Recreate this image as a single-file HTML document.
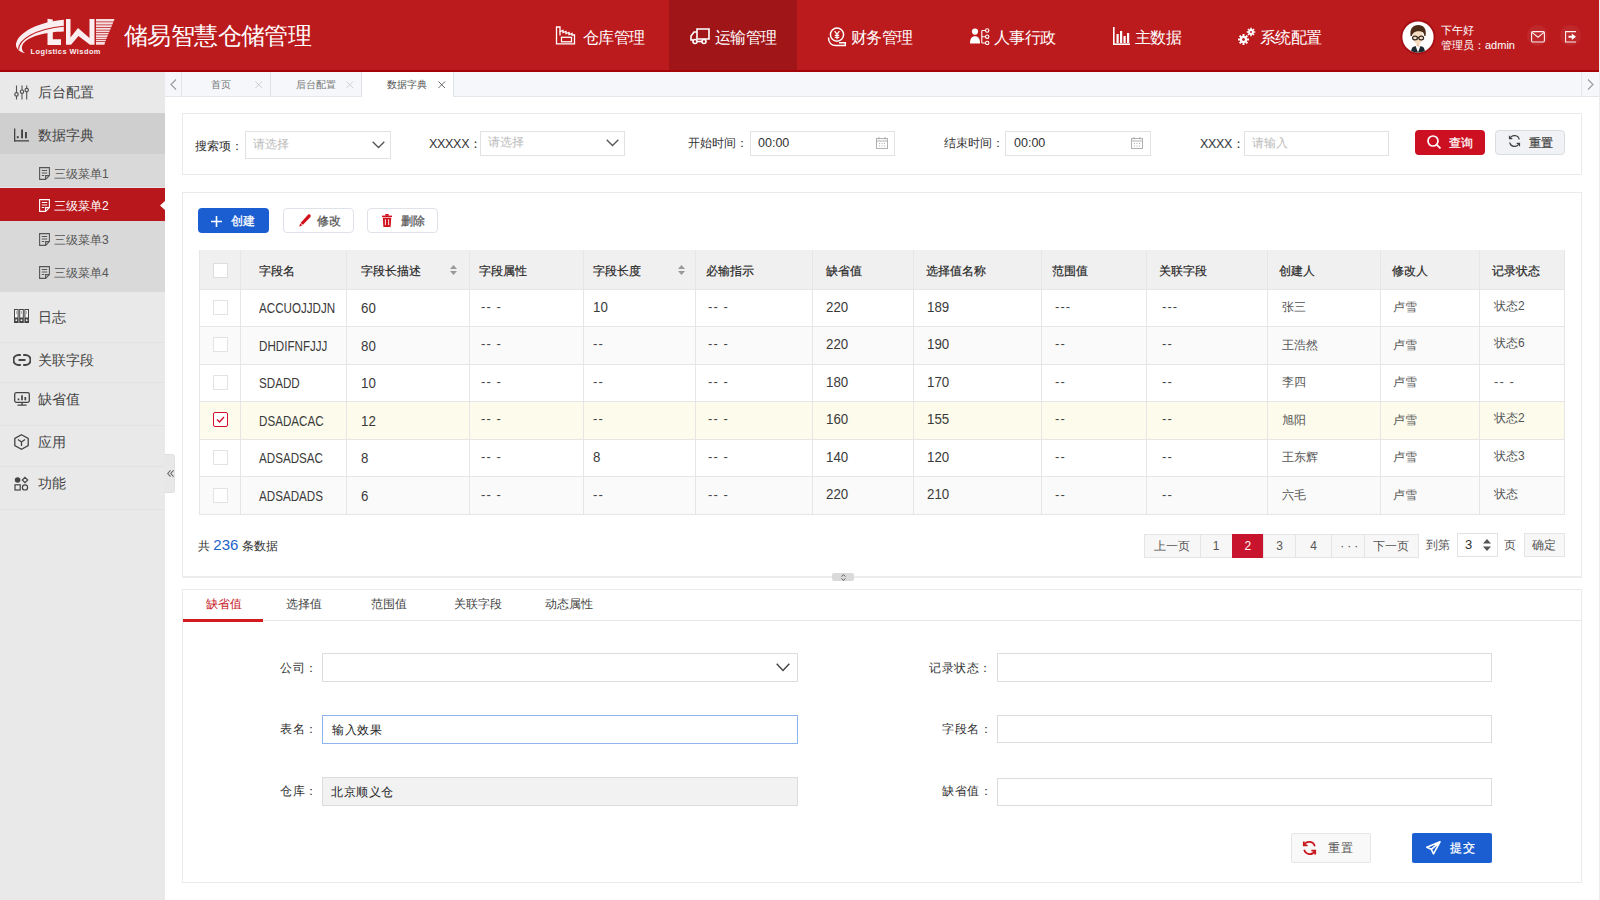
<!DOCTYPE html>
<html><head><meta charset="utf-8">
<style>
*{margin:0;padding:0;box-sizing:border-box}
html,body{width:1600px;height:900px;overflow:hidden;background:#fff;font-family:"Liberation Sans",sans-serif;color:#333}
.a{position:absolute}
#hdr{left:0;top:0;width:1600px;height:72px;background:#bc1b1e;border-bottom:2px solid #a20407}
#hdr .nav{top:3px;height:70px;color:#fff;font-size:16px;line-height:70px;letter-spacing:-0.6px;white-space:nowrap}
#hdr .act{left:669px;top:0;width:128px;height:70px;background:#9f1518}
#side{left:0;top:72px;width:165px;height:828px;background:#e9e9e9}
.si{left:0;width:165px;color:#444;font-size:14px;white-space:nowrap}
.si svg{position:absolute}
#tabs{left:165px;top:72px;width:1435px;height:25px;background:#f5f7fa;border-bottom:1px solid #e3e6ea}
.tab{top:0;height:24px;font-size:10px;color:#777;line-height:25.5px;border-right:1px solid #dfe3e8}
.panel{border:1px solid #ebebeb;background:#fff}
.lbl{font-size:12px;color:#333;white-space:nowrap}
.inp{border:1px solid #e2e2e2;background:#fff}
.ph{font-size:12px;color:#bbb;white-space:nowrap}
.th{font-size:12px;color:#2a2a2a;white-space:nowrap;-webkit-text-stroke:0.2px}
.td{font-size:13px;color:#3a3a3a;white-space:nowrap}
</style></head><body>

<!-- HEADER -->
<div id="hdr" class="a">
  <div class="a act"></div>
  <!-- logo -->
  <svg class="a" style="left:10px;top:10px" width="110" height="50" viewBox="0 0 110 50">
    <g fill="#fbeef0">
      <path d="M15 43.3 C 8 41.5, 4.5 37, 6.5 32 C 10 22, 28 12, 53.8 9.7 L 53.8 21.4 C 34 21.8, 18 27, 13.3 33.5 C 11 37, 11.5 41, 15 43.3 Z"/>
      <path d="M37.5 8.8 L42.8 9.6 L42.8 29.3 L51 29.3 L51 35 L37.5 35 Z"/>
      <path d="M56 9 L60.5 9 L60.5 27.5 L68 18 L79.5 28 L79.5 9 L84.5 9 L84.5 34.8 L80 34.8 L68.5 26 L61 34.8 L56 34.8 Z"/>
      <path d="M86 9 L104.5 9 L103.6 11.4 L86 11.4 Z M86 12.3 L103.2 12.3 L102.4 14.4 L86 14.4 Z M86 15.3 L102 15.3 L101.3 17.2 L86 17.2 Z M86 18 L100.9 18 L100.2 19.8 L86 19.8 Z M86 20.6 L99.9 20.6 L99.2 22.3 L86 22.3 Z M86 23 L98.8 23 L98.2 24.6 L86 24.6 Z M86 25.3 L97.9 25.3 L97.3 26.9 L86 26.9 Z M86 27.6 L97 27.6 L96.4 29.1 L86 29.1 Z M86 29.8 L96.1 29.8 L95.5 31.3 L86 31.3 Z M86 32 L95.2 32 L94.4 34.8 L86 34.8 Z" opacity="0.92"/>
    </g>
    <path d="M 8.6 39.5 C 8.5 30, 25 18.8, 53.8 16.2" fill="none" stroke="#bc1b1e" stroke-width="1.1"/>
    <path d="M 47 20.8 L 43.6 21.8" fill="none" stroke="#b81b1d" stroke-width="0"/>
    <text x="20.5" y="43.8" font-family="Liberation Sans" font-weight="bold" font-size="7.4" fill="#fbeef0" letter-spacing="0.45">Logistics Wisdom</text>
  </svg>
  <div class="a" style="left:124px;top:21px;font-size:24px;line-height:30px;letter-spacing:-0.6px;color:#fff;white-space:nowrap">储易智慧仓储管理</div>

  <!-- nav -->
  <svg class="a" style="left:555px;top:26px" width="21" height="19" viewBox="0 0 21 19" fill="none" stroke="#fff" stroke-width="1.3" stroke-linejoin="miter">
    <path d="M1.5 1 H5 V5.5 L8 4.5 V6.5 L11 5.5 V7.5 L14 6.5 V8.5 L17 7.5 V9 L19.5 9 V17.8 H1.5 Z"/><rect x="6.5" y="11.3" width="10" height="4.5"/><path d="M5 5.5 V9.5"/>
  </svg>
  <div class="a nav" style="left:583px">仓库管理</div>
  <svg class="a" style="left:690px;top:27px" width="20" height="18" viewBox="0 0 20 18" fill="none" stroke="#fff" stroke-width="1.6">
    <path d="M7 2 H19 V12 H7 Z"/><path d="M7 5 H4 L1 9 V13 H3"/><circle cx="5" cy="14.5" r="2"/><circle cx="14" cy="14.5" r="2"/><path d="M7 14.5h5"/>
  </svg>
  <div class="a nav" style="left:715px">运输管理</div>
  <svg class="a" style="left:827px;top:27px" width="20" height="20" viewBox="0 0 20 20" fill="none" stroke="#fff" stroke-width="1.5">
    <circle cx="10" cy="7.6" r="6.6"/><path d="M7.6 4.2l2.4 3 2.4-3M10 7.2v5M7.8 8.4h4.4M7.8 10.4h4.4" stroke-width="1.2"/><path d="M1.5 10.5 C1.5 15.5 4.5 18.6 9 18.6 H18.3 V15.8 H12"/>
  </svg>
  <div class="a nav" style="left:851px">财务管理</div>
  <svg class="a" style="left:970px;top:28px" width="20" height="17" viewBox="0 0 20 17" fill="#fff">
    <circle cx="5" cy="3.6" r="3.1"/><path d="M0 15.5 C0 10.5 1.8 8.2 5 8.2 C8.2 8.2 10 10.5 10 15.5 Z"/>
    <g fill="none" stroke="#fff" stroke-width="1.1"><path d="M11.8 2.5v12.5M11.8 2.5h3.5M11.8 8.7h3.5M11.8 15h3.5"/><circle cx="17.2" cy="2.5" r="1.7"/><circle cx="17.2" cy="8.7" r="1.7"/><circle cx="17.2" cy="14.9" r="1.7"/></g>
  </svg>
  <div class="a nav" style="left:994px">人事行政</div>
  <svg class="a" style="left:1113px;top:27px" width="17" height="18" viewBox="0 0 17 18" fill="#fff">
    <rect x="0" y="0" width="1.6" height="18"/><rect x="0" y="16.4" width="17" height="1.6"/><rect x="3.5" y="7" width="2.2" height="9"/><rect x="7" y="4" width="2.2" height="12"/><rect x="10.5" y="9" width="2.2" height="7"/><rect x="14" y="6" width="2.2" height="10"/>
  </svg>
  <div class="a nav" style="left:1135px">主数据</div>
  <svg class="a" style="left:1238px;top:27px" width="18" height="18" viewBox="0 0 18 18" fill="#fff">
    <g transform="translate(5.5 12.5)"><circle r="3.6"/><path d="M-1 -5.5h2v11h-2zM-5.5 -1h11v2h-11z"/><path d="M-1 -5.5h2v11h-2zM-5.5 -1h11v2h-11z" transform="rotate(45)"/><circle r="1.4" fill="#bc1b1e"/></g>
    <g transform="translate(13 5)"><circle r="2.7"/><path d="M-0.8 -4.3h1.6v8.6h-1.6zM-4.3 -0.8h8.6v1.6h-8.6z"/><path d="M-0.8 -4.3h1.6v8.6h-1.6zM-4.3 -0.8h8.6v1.6h-8.6z" transform="rotate(45)"/><circle r="1" fill="#bc1b1e"/></g>
  </svg>
  <div class="a nav" style="left:1260px">系统配置</div>

  <!-- user -->
  <svg class="a" style="left:1400px;top:19px" width="36" height="36" viewBox="-2 -2 36 36">
    <defs><clipPath id="avc"><circle cx="16" cy="16" r="15.5"/></clipPath></defs>
    <circle cx="16" cy="16" r="17.5" fill="#a50f14"/>
    <circle cx="16" cy="16" r="15.6" fill="#fff"/>
    <g clip-path="url(#avc)">
    <path d="M8.5 32 L10 27 C11 25.5 13 25 16 25 C19 25 21 25.5 22 27 L23.5 32 Z" fill="#1a2a30"/>
    <path d="M13.6 25 L16 31.5 L18.4 25 Z" fill="#fafafa"/>
    <rect x="14.6" y="21" width="2.8" height="4.5" fill="#efc9a6"/>
    <ellipse cx="16" cy="16.2" rx="5.4" ry="6.6" fill="#f6dcc0"/>
    <path d="M8.6 15 C7.5 7.5 11 4 16.2 4 C21.5 4 24.8 7.5 23.6 15 L22.4 15 C22 12 21 10.8 19 10.5 C16 10 13 10.5 11.5 12 C10.5 13 10 14 9.8 15 Z" fill="#4a2c18"/>
    <g fill="none" stroke="#2e2620" stroke-width="1.2"><ellipse cx="13" cy="17" rx="2.4" ry="1.9"/><ellipse cx="19.2" cy="17" rx="2.4" ry="1.9"/><path d="M15.4 16.6h1.4"/></g>
    </g>
  </svg>
  <div class="a" style="left:1441px;top:24px;font-size:11px;line-height:13px;color:#fff;white-space:nowrap">下午好</div>
  <div class="a" style="left:1441px;top:39px;font-size:11px;line-height:13px;color:#fff;white-space:nowrap">管理员：admin</div>
  <div class="a" style="left:1527px;top:25px;width:21px;height:21px;border-radius:50%;background:rgba(255,255,255,0.06)"></div>
  <svg class="a" style="left:1531px;top:31px" width="14" height="12" viewBox="0 0 14 12" fill="none" stroke="#fdf0f0" stroke-width="1.1"><rect x="0.6" y="0.6" width="12.8" height="10.4" rx="1.2"/><path d="M1 1.4 L7 6.2 L13 1.4"/></svg>
  <div class="a" style="left:1560px;top:25px;width:21px;height:21px;border-radius:50%;background:rgba(255,255,255,0.06)"></div>
  <svg class="a" style="left:1565px;top:31px" width="12" height="12" viewBox="0 0 12 12"><path d="M11 0.6H0.6V11H11" fill="none" stroke="#fdf0f0" stroke-width="1.1"/><path d="M3.5 4.8h3.3v-2.3l4.2 3.3-4.2 3.3v-2.3h-3.3z" fill="#fff"/></svg>
</div>

<!-- SIDEBAR -->
<div id="side" class="a">
  <div class="a" style="left:0;top:41px;width:165px;height:41px;background:#cfcfcf"></div>
  <div class="a" style="left:0;top:82px;width:165px;height:138px;background:#d9d9d9"></div>
  <div class="a" style="left:0;top:116px;width:165px;height:33px;background:#b8181b"></div>
  <svg class="a" style="left:160px;top:128px" width="6" height="11" viewBox="0 0 6 11"><path d="M6 0 L0 5.5 L6 11 Z" fill="#fff"/></svg>
  <div class="a" style="left:0;top:115px;width:165px;height:1px;background:#e6e6e6"></div>
  <div class="a" style="left:0;top:270px;width:165px;height:1px;background:#e2e2e2"></div>
  <div class="a" style="left:0;top:310px;width:165px;height:1px;background:#e2e2e2"></div>
  <div class="a" style="left:0;top:353px;width:165px;height:1px;background:#e2e2e2"></div>
  <div class="a" style="left:0;top:394px;width:165px;height:1px;background:#e2e2e2"></div>
  <div class="a" style="left:0;top:437px;width:165px;height:1px;background:#e2e2e2"></div>
</div>
<!-- sidebar items -->
<svg class="a" style="left:13px;top:85px" width="16" height="15" viewBox="0 0 16 15" fill="none" stroke="#555" stroke-width="1.1">
  <path d="M3.5 0.5v14M9 0.5v14M13.7 0.5v14"/><circle cx="3.5" cy="9.4" r="1.7" fill="#e9e9e9" stroke-width="1.2"/><circle cx="9" cy="6.7" r="1.7" fill="#e9e9e9" stroke-width="1.2"/><circle cx="13.7" cy="5.1" r="1.7" fill="#e9e9e9" stroke-width="1.2"/>
</svg>
<div class="a si" style="top:83px;left:38px;width:auto;line-height:18px">后台配置</div>
<svg class="a" style="left:14px;top:128px" width="16" height="14" viewBox="0 0 16 14" fill="#444">
  <rect x="0" y="0.5" width="1.3" height="13"/><rect x="0" y="12.2" width="15" height="1.3"/><rect x="2.8" y="8.2" width="1.9" height="2"/><rect x="7.1" y="1.5" width="1.9" height="8.8"/><rect x="11" y="4" width="1.9" height="6.3"/>
</svg>
<div class="a si" style="top:126px;left:38px;width:auto;line-height:18px">数据字典</div>

<svg class="a" style="left:39px;top:167px" width="11" height="13" viewBox="0 0 11 13" fill="none" stroke="#555" stroke-width="1.1"><path d="M0.6 0.6h9.8v8l-3.8 3.8h-6z M10.4 8.6h-3.8v3.8"/><path d="M2.8 3.5h5.4M2.8 6h5.4M2.8 8.5h2.5"/></svg>
<div class="a si" style="top:165.5px;left:54px;width:auto;font-size:12px;line-height:17px;color:#555">三级菜单1</div>
<svg class="a" style="left:39px;top:199px" width="11" height="13" viewBox="0 0 11 13" fill="none" stroke="#fff" stroke-width="1.1"><path d="M0.6 0.6h9.8v8l-3.8 3.8h-6z M10.4 8.6h-3.8v3.8"/><path d="M2.8 3.5h5.4M2.8 6h5.4M2.8 8.5h2.5"/></svg>
<div class="a si" style="top:197.5px;left:54px;width:auto;font-size:12px;line-height:17px;color:#fff">三级菜单2</div>
<svg class="a" style="left:39px;top:233px" width="11" height="13" viewBox="0 0 11 13" fill="none" stroke="#555" stroke-width="1.1"><path d="M0.6 0.6h9.8v8l-3.8 3.8h-6z M10.4 8.6h-3.8v3.8"/><path d="M2.8 3.5h5.4M2.8 6h5.4M2.8 8.5h2.5"/></svg>
<div class="a si" style="top:231.5px;left:54px;width:auto;font-size:12px;line-height:17px;color:#555">三级菜单3</div>
<svg class="a" style="left:39px;top:266px" width="11" height="13" viewBox="0 0 11 13" fill="none" stroke="#555" stroke-width="1.1"><path d="M0.6 0.6h9.8v8l-3.8 3.8h-6z M10.4 8.6h-3.8v3.8"/><path d="M2.8 3.5h5.4M2.8 6h5.4M2.8 8.5h2.5"/></svg>
<div class="a si" style="top:264.5px;left:54px;width:auto;font-size:12px;line-height:17px;color:#555">三级菜单4</div>

<svg class="a" style="left:14px;top:309px" width="15" height="14" viewBox="0 0 15 14">
  <g fill="#444"><rect x="0" y="0" width="4.6" height="14"/><rect x="5.2" y="0" width="4.6" height="14"/><rect x="10.4" y="0" width="4.6" height="14"/></g>
  <g fill="#f4f4f4"><rect x="1" y="1" width="2.6" height="7.5"/><rect x="6.2" y="1" width="2.6" height="7.5"/><rect x="11.4" y="1" width="2.6" height="7.5"/><circle cx="2.3" cy="11.2" r="0.9"/><circle cx="7.5" cy="11.2" r="0.9"/><circle cx="12.7" cy="11.2" r="0.9"/></g>
  <g fill="#888"><rect x="2" y="2" width="0.6" height="3"/><rect x="7.2" y="2" width="0.6" height="3"/><rect x="12.4" y="2" width="0.6" height="3"/></g>
</svg>
<div class="a si" style="top:308px;left:38px;width:auto;line-height:18px">日志</div>
<svg class="a" style="left:13px;top:354px" width="18" height="12" viewBox="0 0 18 12" fill="none" stroke="#444" stroke-width="2">
  <path d="M7.8 1H5.5A4.8 4.8 0 0 0 5.5 11H7.8M10.2 1h2.3a4.8 4.8 0 0 1 0 10H10.2M5.5 6h7"/>
</svg>
<div class="a si" style="top:351px;left:38px;width:auto;line-height:18px">关联字段</div>
<svg class="a" style="left:14px;top:392px" width="16" height="14" viewBox="0 0 16 14" fill="none" stroke="#444" stroke-width="1.3">
  <rect x="0.7" y="0.7" width="14.6" height="9.6" rx="1.5"/><path d="M3.5 13.2h9M8 10.3v2.9"/><path d="M4.5 8.2V6.6M8 8.2V3.2M11.3 8.2V5" stroke-width="1.7"/>
</svg>
<div class="a si" style="top:390px;left:38px;width:auto;line-height:18px">缺省值</div>
<svg class="a" style="left:14px;top:434px" width="15" height="16" viewBox="0 0 15 16" fill="none" stroke="#444" stroke-width="1.3">
  <path d="M7.5 0.8L14.2 4.4V11.6L7.5 15.2L0.8 11.6V4.4Z"/><path d="M4 5.5L7.5 8L11 5.5M7.5 8V12"/>
</svg>
<div class="a si" style="top:433px;left:38px;width:auto;line-height:18px">应用</div>
<svg class="a" style="left:14px;top:476px" width="15" height="15" viewBox="0 0 15 15" fill="none" stroke="#444" stroke-width="1.2">
  <circle cx="3.6" cy="4" r="2.8" fill="#444" stroke="none"/><path d="M11 1.3L13.7 4L11 6.7L8.3 4Z"/><rect x="1" y="8.8" width="5.2" height="5.2"/><circle cx="11" cy="11.4" r="2.6"/>
</svg>
<div class="a si" style="top:474px;left:38px;width:auto;line-height:18px">功能</div>
<div class="a" style="left:164px;top:454px;width:11px;height:39px;background:#e8e8e8;border-radius:0 3px 3px 0;border:1px solid #e0e0e0;border-left:none"></div>
<svg class="a" style="left:166.5px;top:469.5px" width="7" height="7" viewBox="0 0 8 8" fill="none" stroke="#666" stroke-width="1.2"><path d="M4 0.5L0.8 4L4 7.5M7.5 0.5L4.3 4L7.5 7.5"/></svg>


<!-- TABS -->
<div id="tabs" class="a">
  <div class="a" style="left:0;top:0;width:17px;height:24px;border-right:1px solid #e3e6ea"></div>
  <svg class="a" style="left:5px;top:7px" width="7" height="11" viewBox="0 0 7 11"><path d="M6 0.5L1 5.5L6 10.5" fill="none" stroke="#999" stroke-width="1.1"/></svg>
  <div class="a tab" style="left:17px;width:89px;"><span class="a" style="left:29px">首页</span><svg class="a" style="left:73px;top:8.5px" width="7.5" height="7.5" viewBox="0 0 8 8"><path d="M0.5 0.5L7.5 7.5M7.5 0.5L0.5 7.5" stroke="#c8c8c8" stroke-width="0.9"/></svg></div>
  <div class="a tab" style="left:106px;width:91px;"><span class="a" style="left:25px">后台配置</span><svg class="a" style="left:75px;top:8.5px" width="7.5" height="7.5" viewBox="0 0 8 8"><path d="M0.5 0.5L7.5 7.5M7.5 0.5L0.5 7.5" stroke="#c8c8c8" stroke-width="0.9"/></svg></div>
  <div class="a" style="left:197px;top:0;width:92px;height:25px;background:#fff;border-right:1px solid #dfe3e8"><span class="a" style="left:25px;font-size:10px;line-height:25.5px;color:#555">数据字典</span><svg class="a" style="left:76px;top:8.5px" width="7.5" height="7.5" viewBox="0 0 8 8"><path d="M0.5 0.5L7.5 7.5M7.5 0.5L0.5 7.5" stroke="#555" stroke-width="0.9"/></svg></div>
  <div class="a" style="left:1416px;top:0;width:17px;height:24px;border-left:1px solid #e3e6ea"></div>
  <svg class="a" style="left:1422px;top:7px" width="7" height="11" viewBox="0 0 7 11"><path d="M1 0.5L6 5.5L1 10.5" fill="none" stroke="#999" stroke-width="1.1"/></svg>
</div>



<div class="a" style="left:1598.5px;top:0;width:1.5px;height:900px;background:#ececec;z-index:5"></div>
<!-- MAIN -->
<div class="a panel" style="left:182px;top:113px;width:1400px;height:62px"></div>
<div class="a lbl" style="left:195px;top:138px;line-height:17px">搜索项：</div>
<div class="a inp" style="left:245px;top:131px;width:146px;height:28px"></div>
<div class="a ph" style="left:253px;top:136px;line-height:17px">请选择</div>
<svg class="a" style="left:372px;top:141px" width="13" height="8" viewBox="0 0 13 8"><path d="M0.7 0.7L6.5 6.5L12.3 0.7" fill="none" stroke="#555" stroke-width="1.3"/></svg>
<div class="a lbl" style="left:429px;top:135.5px;line-height:17px;font-size:12.5px;letter-spacing:-0.3px">XXXXX：</div>
<div class="a inp" style="left:480px;top:131px;width:145px;height:25px"></div>
<div class="a ph" style="left:488px;top:134px;line-height:17px">请选择</div>
<svg class="a" style="left:606px;top:139px" width="13" height="8" viewBox="0 0 13 8"><path d="M0.7 0.7L6.5 6.5L12.3 0.7" fill="none" stroke="#555" stroke-width="1.3"/></svg>
<div class="a lbl" style="left:688px;top:135px;line-height:17px">开始时间：</div>
<div class="a inp" style="left:750px;top:131px;width:145px;height:25px"></div>
<div class="a" style="left:758px;top:135px;font-size:12.5px;line-height:17px;color:#333">00:00</div>
<svg class="a" style="left:876px;top:137px" width="12" height="12" viewBox="0 0 12 12" fill="none" stroke="#aaa" stroke-width="0.9"><rect x="0.5" y="1.5" width="11" height="10"/><path d="M0.5 4h11M3 0v2.5M9 0v2.5"/><path d="M3 6.5h1M5.5 6.5h1M8 6.5h1M3 9h1M5.5 9h1M8 9h1"/></svg>
<div class="a lbl" style="left:944px;top:135px;line-height:17px">结束时间：</div>
<div class="a inp" style="left:1005px;top:131px;width:146px;height:25px"></div>
<div class="a" style="left:1014px;top:135px;font-size:12.5px;line-height:17px;color:#333">00:00</div>
<svg class="a" style="left:1131px;top:137px" width="12" height="12" viewBox="0 0 12 12" fill="none" stroke="#aaa" stroke-width="0.9"><rect x="0.5" y="1.5" width="11" height="10"/><path d="M0.5 4h11M3 0v2.5M9 0v2.5"/><path d="M3 6.5h1M5.5 6.5h1M8 6.5h1M3 9h1M5.5 9h1M8 9h1"/></svg>
<div class="a lbl" style="left:1200px;top:135.5px;line-height:17px;font-size:12.5px;letter-spacing:-0.3px">XXXX：</div>
<div class="a inp" style="left:1244px;top:131px;width:145px;height:25px"></div>
<div class="a ph" style="left:1252px;top:135px;line-height:17px">请输入</div>
<div class="a" style="left:1415px;top:130px;width:70px;height:25px;background:#cc1022;border-radius:4px"></div>
<svg class="a" style="left:1427px;top:135px" width="15" height="14" viewBox="0 0 15 14" fill="none" stroke="#fff" stroke-width="1.7"><circle cx="6" cy="6" r="5"/><path d="M9.6 9.6L13.5 13.3"/></svg>
<div class="a" style="left:1449px;top:135px;font-size:12px;line-height:17px;color:#fff;font-weight:400;-webkit-text-stroke:0.25px">查询</div>
<div class="a" style="left:1495px;top:130px;width:70px;height:25px;background:#f1f2f5;border:1px solid #d9dce1;border-radius:4px"></div>
<svg class="a" style="left:1508px;top:135px" width="13" height="12" viewBox="0 0 13 12" fill="none" stroke="#444" stroke-width="1.2"><path d="M11.3 4.5A5 5 0 0 0 2 3.2M1.7 7.5A5 5 0 0 0 11 8.8"/><path d="M1.5 0.8V3.6H4.3M11.5 11.2V8.4H8.7"/></svg>
<div class="a" style="left:1529px;top:135px;font-size:12px;line-height:17px;color:#444;font-weight:400;-webkit-text-stroke:0.25px">重置</div>
<div class="a panel" style="left:182px;top:192px;width:1400px;height:386px;border-bottom:2px solid #ececec"></div>
<div class="a" style="left:198px;top:208px;width:71px;height:25px;background:#1b5ed1;border-radius:4px"></div>
<svg class="a" style="left:211px;top:216px" width="11" height="11" viewBox="0 0 11 11" stroke="#fff" stroke-width="1.6"><path d="M5.5 0v11M0 5.5h11"/></svg>
<div class="a" style="left:231px;top:213px;font-size:12px;line-height:17px;color:#fff;font-weight:400;-webkit-text-stroke:0.25px">创建</div>
<div class="a" style="left:283px;top:208px;width:71px;height:25px;background:#fff;border:1px solid #dfe2e8;border-radius:4px"></div>
<svg class="a" style="left:299px;top:214px" width="12" height="13" viewBox="0 0 12 13" fill="#d0111b"><path d="M9 0.8 C9.8 0, 11.2 0.2, 11.6 1.2 C12 2, 11.6 2.8, 11 3.4 L4 10.8 L1.5 9 Z"/><path d="M1.2 9.6 L3.4 11.3 L0.3 12.8 Z"/></svg>
<div class="a" style="left:317px;top:213px;font-size:12px;line-height:17px;color:#555;font-weight:400;-webkit-text-stroke:0.25px">修改</div>
<div class="a" style="left:367px;top:208px;width:71px;height:25px;background:#fff;border:1px solid #dfe2e8;border-radius:4px"></div>
<svg class="a" style="left:382px;top:214px" width="10" height="13" viewBox="0 0 10 13" fill="#d0111b"><rect x="0" y="1.6" width="10" height="1.5"/><rect x="3.3" y="0" width="3.4" height="1.8"/><path d="M0.8 3.8h8.4L8.6 13H1.4Z"/><g fill="#fff"><rect x="2.9" y="5.2" width="0.9" height="6"/><rect x="6.2" y="5.2" width="0.9" height="6"/></g></svg>
<div class="a" style="left:401px;top:213px;font-size:12px;line-height:17px;color:#555;font-weight:400;-webkit-text-stroke:0.25px">删除</div>
<div class="a" style="left:199px;top:250px;width:1366px;height:264px;border:1px solid #e6e6e6;border-top:none;background:#fff"></div>
<div class="a" style="left:199px;top:250px;width:1366px;height:38.5px;background:#f0f0f0"></div>
<div class="a" style="left:200px;top:288.5px;width:1364px;height:37.5px;background:#fff"></div>
<div class="a" style="left:200px;top:326px;width:1364px;height:37.5px;background:#fafafa"></div>
<div class="a" style="left:200px;top:363.5px;width:1364px;height:37.5px;background:#fff"></div>
<div class="a" style="left:200px;top:401px;width:1364px;height:37.5px;background:#fcfbec"></div>
<div class="a" style="left:200px;top:438.5px;width:1364px;height:37.5px;background:#fff"></div>
<div class="a" style="left:200px;top:476px;width:1364px;height:38px;background:#fafafa"></div>
<div class="a" style="left:199px;top:288.5px;width:1366px;height:1px;background:#e6e6e6"></div>
<div class="a" style="left:199px;top:326px;width:1366px;height:1px;background:#e6e6e6"></div>
<div class="a" style="left:199px;top:363.5px;width:1366px;height:1px;background:#e6e6e6"></div>
<div class="a" style="left:199px;top:401px;width:1366px;height:1px;background:#e6e6e6"></div>
<div class="a" style="left:199px;top:438.5px;width:1366px;height:1px;background:#e6e6e6"></div>
<div class="a" style="left:199px;top:476px;width:1366px;height:1px;background:#e6e6e6"></div>
<div class="a" style="left:240px;top:250px;width:1px;height:264px;background:#e6e6e6"></div>
<div class="a" style="left:346px;top:250px;width:1px;height:264px;background:#e6e6e6"></div>
<div class="a" style="left:468.5px;top:250px;width:1px;height:264px;background:#e6e6e6"></div>
<div class="a" style="left:582.5px;top:250px;width:1px;height:264px;background:#e6e6e6"></div>
<div class="a" style="left:695px;top:250px;width:1px;height:264px;background:#e6e6e6"></div>
<div class="a" style="left:812px;top:250px;width:1px;height:264px;background:#e6e6e6"></div>
<div class="a" style="left:912.5px;top:250px;width:1px;height:264px;background:#e6e6e6"></div>
<div class="a" style="left:1040.5px;top:250px;width:1px;height:264px;background:#e6e6e6"></div>
<div class="a" style="left:1146px;top:250px;width:1px;height:264px;background:#e6e6e6"></div>
<div class="a" style="left:1267px;top:250px;width:1px;height:264px;background:#e6e6e6"></div>
<div class="a" style="left:1380px;top:250px;width:1px;height:264px;background:#e6e6e6"></div>
<div class="a" style="left:1479px;top:250px;width:1px;height:264px;background:#e6e6e6"></div>
<div class="a" style="left:199px;top:250px;width:1366px;height:264.5px;border:1px solid #e6e6e6;border-top:none"></div>
<div class="a th" style="left:259px;top:261.5px;line-height:18px">字段名</div>
<div class="a th" style="left:360.5px;top:261.5px;line-height:18px">字段长描述</div>
<div class="a th" style="left:478.5px;top:261.5px;line-height:18px">字段属性</div>
<div class="a th" style="left:593px;top:261.5px;line-height:18px">字段长度</div>
<div class="a th" style="left:706px;top:261.5px;line-height:18px">必输指示</div>
<div class="a th" style="left:826px;top:261.5px;line-height:18px">缺省值</div>
<div class="a th" style="left:926px;top:261.5px;line-height:18px">选择值名称</div>
<div class="a th" style="left:1052px;top:261.5px;line-height:18px">范围值</div>
<div class="a th" style="left:1159px;top:261.5px;line-height:18px">关联字段</div>
<div class="a th" style="left:1279px;top:261.5px;line-height:18px">创建人</div>
<div class="a th" style="left:1391.5px;top:261.5px;line-height:18px">修改人</div>
<div class="a th" style="left:1491.5px;top:261.5px;line-height:18px">记录状态</div>
<svg class="a" style="left:450px;top:265px" width="7" height="10" viewBox="0 0 7 10" fill="#999"><path d="M3.5 0L7 4H0Z M0 6H7L3.5 10Z"/></svg>
<svg class="a" style="left:678px;top:265px" width="7" height="10" viewBox="0 0 7 10" fill="#999"><path d="M3.5 0L7 4H0Z M0 6H7L3.5 10Z"/></svg>
<div class="a" style="left:213px;top:263px;width:15px;height:15px;border:1px solid #ddd;background:#fff"></div>
<div class="a" style="left:213px;top:299.75px;width:15px;height:15px;border:1px solid #e3e3e3;background:#fff"></div>
<div class="a td" style="left:259px;top:299.4px;line-height:18px;font-size:14px;color:#3a3a3a;transform:scaleX(0.83);transform-origin:0 0">ACCUOJJDJN</div>
<div class="a td" style="left:361px;top:299.4px;line-height:18px;font-size:14px;color:#3a3a3a;transform:scaleX(0.95);transform-origin:0 0">60</div>
<div class="a td" style="left:481px;top:297.75px;line-height:18px;font-size:13px;color:#444;letter-spacing:1.1px">-- -</div>
<div class="a td" style="left:593px;top:297.59999999999997px;line-height:18px;font-size:14px;color:#3a3a3a;transform:scaleX(0.95);transform-origin:0 0">10</div>
<div class="a td" style="left:708px;top:297.75px;line-height:18px;font-size:13px;color:#444;letter-spacing:1.1px">-- -</div>
<div class="a td" style="left:826px;top:297.59999999999997px;line-height:18px;font-size:14px;color:#3a3a3a;transform:scaleX(0.95);transform-origin:0 0">220</div>
<div class="a td" style="left:927px;top:297.59999999999997px;line-height:18px;font-size:14px;color:#3a3a3a;transform:scaleX(0.95);transform-origin:0 0">189</div>
<div class="a td" style="left:1055px;top:297.75px;line-height:18px;font-size:13px;color:#444;letter-spacing:1.1px">---</div>
<div class="a td" style="left:1162px;top:297.75px;line-height:18px;font-size:13px;color:#444;letter-spacing:1.1px">---</div>
<div class="a td" style="left:1282px;top:298.25px;line-height:18px;font-size:12px;color:#555">张三</div>
<div class="a td" style="left:1393px;top:298.25px;line-height:18px;font-size:12px;color:#555">卢雪</div>
<div class="a td" style="left:1494px;top:296.75px;line-height:18px;font-size:12px;color:#555">状态2</div>
<div class="a" style="left:213px;top:337.25px;width:15px;height:15px;border:1px solid #e3e3e3;background:#fff"></div>
<div class="a td" style="left:259px;top:336.9px;line-height:18px;font-size:14px;color:#3a3a3a;transform:scaleX(0.83);transform-origin:0 0">DHDIFNFJJJ</div>
<div class="a td" style="left:361px;top:336.9px;line-height:18px;font-size:14px;color:#3a3a3a;transform:scaleX(0.95);transform-origin:0 0">80</div>
<div class="a td" style="left:481px;top:335.25px;line-height:18px;font-size:13px;color:#444;letter-spacing:1.1px">-- -</div>
<div class="a td" style="left:593px;top:335.25px;line-height:18px;font-size:13px;color:#444;letter-spacing:1.1px">--</div>
<div class="a td" style="left:708px;top:335.25px;line-height:18px;font-size:13px;color:#444;letter-spacing:1.1px">-- -</div>
<div class="a td" style="left:826px;top:335.09999999999997px;line-height:18px;font-size:14px;color:#3a3a3a;transform:scaleX(0.95);transform-origin:0 0">220</div>
<div class="a td" style="left:927px;top:335.09999999999997px;line-height:18px;font-size:14px;color:#3a3a3a;transform:scaleX(0.95);transform-origin:0 0">190</div>
<div class="a td" style="left:1055px;top:335.25px;line-height:18px;font-size:13px;color:#444;letter-spacing:1.1px">--</div>
<div class="a td" style="left:1162px;top:335.25px;line-height:18px;font-size:13px;color:#444;letter-spacing:1.1px">--</div>
<div class="a td" style="left:1282px;top:335.75px;line-height:18px;font-size:12px;color:#555">王浩然</div>
<div class="a td" style="left:1393px;top:335.75px;line-height:18px;font-size:12px;color:#555">卢雪</div>
<div class="a td" style="left:1494px;top:334.25px;line-height:18px;font-size:12px;color:#555">状态6</div>
<div class="a" style="left:213px;top:374.75px;width:15px;height:15px;border:1px solid #e3e3e3;background:#fff"></div>
<div class="a td" style="left:259px;top:374.4px;line-height:18px;font-size:14px;color:#3a3a3a;transform:scaleX(0.83);transform-origin:0 0">SDADD</div>
<div class="a td" style="left:361px;top:374.4px;line-height:18px;font-size:14px;color:#3a3a3a;transform:scaleX(0.95);transform-origin:0 0">10</div>
<div class="a td" style="left:481px;top:372.75px;line-height:18px;font-size:13px;color:#444;letter-spacing:1.1px">-- -</div>
<div class="a td" style="left:593px;top:372.75px;line-height:18px;font-size:13px;color:#444;letter-spacing:1.1px">--</div>
<div class="a td" style="left:708px;top:372.75px;line-height:18px;font-size:13px;color:#444;letter-spacing:1.1px">-- -</div>
<div class="a td" style="left:826px;top:372.59999999999997px;line-height:18px;font-size:14px;color:#3a3a3a;transform:scaleX(0.95);transform-origin:0 0">180</div>
<div class="a td" style="left:927px;top:372.59999999999997px;line-height:18px;font-size:14px;color:#3a3a3a;transform:scaleX(0.95);transform-origin:0 0">170</div>
<div class="a td" style="left:1055px;top:372.75px;line-height:18px;font-size:13px;color:#444;letter-spacing:1.1px">--</div>
<div class="a td" style="left:1162px;top:372.75px;line-height:18px;font-size:13px;color:#444;letter-spacing:1.1px">--</div>
<div class="a td" style="left:1282px;top:373.25px;line-height:18px;font-size:12px;color:#555">李四</div>
<div class="a td" style="left:1393px;top:373.25px;line-height:18px;font-size:12px;color:#555">卢雪</div>
<div class="a td" style="left:1494px;top:372.75px;line-height:18px;font-size:13px;color:#555;letter-spacing:1.1px">-- -</div>
<div class="a" style="left:213px;top:412.25px;width:15px;height:15px;border:1.3px solid #d0112b;border-radius:2px;background:#fff"></div>
<svg class="a" style="left:215px;top:414.25px" width="11" height="11" viewBox="0 0 11 11" fill="none" stroke="#d0112b" stroke-width="1.4"><path d="M2 5.5L4.5 8L9 3"/></svg>
<div class="a td" style="left:259px;top:411.9px;line-height:18px;font-size:14px;color:#3a3a3a;transform:scaleX(0.83);transform-origin:0 0">DSADACAC</div>
<div class="a td" style="left:361px;top:411.9px;line-height:18px;font-size:14px;color:#3a3a3a;transform:scaleX(0.95);transform-origin:0 0">12</div>
<div class="a td" style="left:481px;top:410.25px;line-height:18px;font-size:13px;color:#444;letter-spacing:1.1px">-- -</div>
<div class="a td" style="left:593px;top:410.25px;line-height:18px;font-size:13px;color:#444;letter-spacing:1.1px">--</div>
<div class="a td" style="left:708px;top:410.25px;line-height:18px;font-size:13px;color:#444;letter-spacing:1.1px">-- -</div>
<div class="a td" style="left:826px;top:410.09999999999997px;line-height:18px;font-size:14px;color:#3a3a3a;transform:scaleX(0.95);transform-origin:0 0">160</div>
<div class="a td" style="left:927px;top:410.09999999999997px;line-height:18px;font-size:14px;color:#3a3a3a;transform:scaleX(0.95);transform-origin:0 0">155</div>
<div class="a td" style="left:1055px;top:410.25px;line-height:18px;font-size:13px;color:#444;letter-spacing:1.1px">--</div>
<div class="a td" style="left:1162px;top:410.25px;line-height:18px;font-size:13px;color:#444;letter-spacing:1.1px">--</div>
<div class="a td" style="left:1282px;top:410.75px;line-height:18px;font-size:12px;color:#555">旭阳</div>
<div class="a td" style="left:1393px;top:410.75px;line-height:18px;font-size:12px;color:#555">卢雪</div>
<div class="a td" style="left:1494px;top:409.25px;line-height:18px;font-size:12px;color:#555">状态2</div>
<div class="a" style="left:213px;top:449.75px;width:15px;height:15px;border:1px solid #e3e3e3;background:#fff"></div>
<div class="a td" style="left:259px;top:449.4px;line-height:18px;font-size:14px;color:#3a3a3a;transform:scaleX(0.83);transform-origin:0 0">ADSADSAC</div>
<div class="a td" style="left:361px;top:449.4px;line-height:18px;font-size:14px;color:#3a3a3a;transform:scaleX(0.95);transform-origin:0 0">8</div>
<div class="a td" style="left:481px;top:447.75px;line-height:18px;font-size:13px;color:#444;letter-spacing:1.1px">-- -</div>
<div class="a td" style="left:593px;top:447.59999999999997px;line-height:18px;font-size:14px;color:#3a3a3a;transform:scaleX(0.95);transform-origin:0 0">8</div>
<div class="a td" style="left:708px;top:447.75px;line-height:18px;font-size:13px;color:#444;letter-spacing:1.1px">-- -</div>
<div class="a td" style="left:826px;top:447.59999999999997px;line-height:18px;font-size:14px;color:#3a3a3a;transform:scaleX(0.95);transform-origin:0 0">140</div>
<div class="a td" style="left:927px;top:447.59999999999997px;line-height:18px;font-size:14px;color:#3a3a3a;transform:scaleX(0.95);transform-origin:0 0">120</div>
<div class="a td" style="left:1055px;top:447.75px;line-height:18px;font-size:13px;color:#444;letter-spacing:1.1px">--</div>
<div class="a td" style="left:1162px;top:447.75px;line-height:18px;font-size:13px;color:#444;letter-spacing:1.1px">--</div>
<div class="a td" style="left:1282px;top:448.25px;line-height:18px;font-size:12px;color:#555">王东辉</div>
<div class="a td" style="left:1393px;top:448.25px;line-height:18px;font-size:12px;color:#555">卢雪</div>
<div class="a td" style="left:1494px;top:446.75px;line-height:18px;font-size:12px;color:#555">状态3</div>
<div class="a" style="left:213px;top:487.5px;width:15px;height:15px;border:1px solid #e3e3e3;background:#fff"></div>
<div class="a td" style="left:259px;top:487.15px;line-height:18px;font-size:14px;color:#3a3a3a;transform:scaleX(0.83);transform-origin:0 0">ADSADADS</div>
<div class="a td" style="left:361px;top:487.15px;line-height:18px;font-size:14px;color:#3a3a3a;transform:scaleX(0.95);transform-origin:0 0">6</div>
<div class="a td" style="left:481px;top:485.5px;line-height:18px;font-size:13px;color:#444;letter-spacing:1.1px">-- -</div>
<div class="a td" style="left:593px;top:485.5px;line-height:18px;font-size:13px;color:#444;letter-spacing:1.1px">--</div>
<div class="a td" style="left:708px;top:485.5px;line-height:18px;font-size:13px;color:#444;letter-spacing:1.1px">-- -</div>
<div class="a td" style="left:826px;top:485.34999999999997px;line-height:18px;font-size:14px;color:#3a3a3a;transform:scaleX(0.95);transform-origin:0 0">220</div>
<div class="a td" style="left:927px;top:485.34999999999997px;line-height:18px;font-size:14px;color:#3a3a3a;transform:scaleX(0.95);transform-origin:0 0">210</div>
<div class="a td" style="left:1055px;top:485.5px;line-height:18px;font-size:13px;color:#444;letter-spacing:1.1px">--</div>
<div class="a td" style="left:1162px;top:485.5px;line-height:18px;font-size:13px;color:#444;letter-spacing:1.1px">--</div>
<div class="a td" style="left:1282px;top:486.0px;line-height:18px;font-size:12px;color:#555">六毛</div>
<div class="a td" style="left:1393px;top:486.0px;line-height:18px;font-size:12px;color:#555">卢雪</div>
<div class="a td" style="left:1494px;top:484.5px;line-height:18px;font-size:12px;color:#555">状态</div>
<div class="a" style="left:198px;top:536px;font-size:12px;line-height:18px;color:#333;white-space:nowrap">共 <span style="color:#1c64c8;font-size:15px">236</span> 条数据</div>
<div class="a" style="left:1144px;top:533.5px;width:56.5px;height:24px;background:#f7f7f7;border:1px solid #e4e4e4;color:#555;font-size:12px;line-height:22px;text-align:center;white-space:nowrap">上一页</div>
<div class="a" style="left:1199.5px;top:533.5px;width:33.0px;height:24px;background:#f7f7f7;border:1px solid #e4e4e4;color:#555;font-size:12px;line-height:22px;text-align:center;white-space:nowrap">1</div>
<div class="a" style="left:1231.5px;top:533.5px;width:32.5px;height:24px;background:#c8142c;border:1px solid #c8142c;color:#fff;font-size:12px;line-height:22px;text-align:center;white-space:nowrap">2</div>
<div class="a" style="left:1263px;top:533.5px;width:33px;height:24px;background:#f7f7f7;border:1px solid #e4e4e4;color:#555;font-size:12px;line-height:22px;text-align:center;white-space:nowrap">3</div>
<div class="a" style="left:1295px;top:533.5px;width:37px;height:24px;background:#f7f7f7;border:1px solid #e4e4e4;color:#555;font-size:12px;line-height:22px;text-align:center;white-space:nowrap">4</div>
<div class="a" style="left:1331px;top:533.5px;width:33.5px;height:24px;background:#f7f7f7;border:1px solid #e4e4e4;color:#555;font-size:12px;line-height:22px;text-align:center;white-space:nowrap"><span style="letter-spacing:3px;margin-left:3px">·</span><span style="letter-spacing:3px">·</span>·</div>
<div class="a" style="left:1363.5px;top:533.5px;width:55.0px;height:24px;background:#f7f7f7;border:1px solid #e4e4e4;color:#555;font-size:12px;line-height:22px;text-align:center;white-space:nowrap">下一页</div>
<div class="a" style="left:1426px;top:537px;font-size:12px;line-height:17px;color:#555">到第</div>
<div class="a" style="left:1457px;top:532.5px;width:41px;height:24px;border:1px solid #e2e2e2;background:#fff"></div>
<div class="a" style="left:1465px;top:536px;font-size:13px;line-height:17px;color:#333">3</div>
<svg class="a" style="left:1483px;top:539px" width="8" height="12" viewBox="0 0 8 12" fill="#555"><path d="M4 0L8 4.5H0Z M0 7.5H8L4 12Z"/></svg>
<div class="a" style="left:1504px;top:537px;font-size:12px;line-height:17px;color:#555">页</div>
<div class="a" style="left:1523.5px;top:532.5px;width:41px;height:24px;border:1px solid #e4e4e4;background:#f7f7f7;font-size:12px;line-height:22px;text-align:center;color:#555">确定</div>
<div class="a" style="left:832px;top:573px;width:22px;height:7.5px;background:#dadada;border-radius:2px"></div>
<svg class="a" style="left:840.5px;top:573.5px" width="5" height="7" viewBox="0 0 5 7" fill="none" stroke="#555" stroke-width="0.9"><path d="M0.5 2.5L2.5 0.7L4.5 2.5M0.5 4.5L2.5 6.3L4.5 4.5"/></svg>
<div class="a panel" style="left:182px;top:589px;width:1400px;height:294px"></div>
<div class="a" style="left:183px;top:620px;width:1398px;height:1px;background:#e8e8e8"></div>
<div class="a" style="left:183px;top:618.5px;width:80px;height:3px;background:#d21a1f"></div>
<div class="a" style="left:206px;top:595px;font-size:12px;line-height:18px;color:#c8161d;white-space:nowrap">缺省值</div>
<div class="a" style="left:286px;top:595px;font-size:12px;line-height:18px;color:#444;white-space:nowrap">选择值</div>
<div class="a" style="left:370.5px;top:595px;font-size:12px;line-height:18px;color:#444;white-space:nowrap">范围值</div>
<div class="a" style="left:453.5px;top:595px;font-size:12px;line-height:18px;color:#444;white-space:nowrap">关联字段</div>
<div class="a" style="left:545px;top:595px;font-size:12px;line-height:18px;color:#444;white-space:nowrap">动态属性</div>
<div class="a lbl" style="left:280px;top:660px;line-height:17px;letter-spacing:0.5px">公司：</div>
<div class="a inp" style="left:322px;top:653px;width:476px;height:29px;border-color:#dcdcdc"></div>
<svg class="a" style="left:776px;top:663px" width="14" height="9" viewBox="0 0 14 9"><path d="M0.7 0.7L7 7.5L13.3 0.7" fill="none" stroke="#444" stroke-width="1.4"/></svg>
<div class="a lbl" style="left:280px;top:721px;line-height:17px;letter-spacing:0.5px">表名：</div>
<div class="a" style="left:322px;top:714.5px;width:476px;height:29px;border:1.5px solid #8db4ef;background:#fff"></div>
<div class="a" style="left:332px;top:721.5px;font-size:12px;line-height:17px;color:#222;letter-spacing:0.6px">输入效果</div>
<div class="a lbl" style="left:280px;top:783px;line-height:17px;letter-spacing:0.5px">仓库：</div>
<div class="a" style="left:322px;top:777px;width:476px;height:29px;border:1px solid #dcdcdc;background:#f2f2f2"></div>
<div class="a" style="left:331px;top:784px;font-size:12px;line-height:17px;color:#222;letter-spacing:0.6px">北京顺义仓</div>
<div class="a lbl" style="left:929px;top:660px;line-height:17px;letter-spacing:0.5px">记录状态：</div>
<div class="a inp" style="left:997px;top:653px;width:495px;height:29px;border-color:#dcdcdc"></div>
<div class="a lbl" style="left:942px;top:721px;line-height:17px;letter-spacing:0.5px">字段名：</div>
<div class="a inp" style="left:997px;top:715px;width:495px;height:28px;border-color:#dcdcdc"></div>
<div class="a lbl" style="left:942px;top:783px;line-height:17px;letter-spacing:0.5px">缺省值：</div>
<div class="a inp" style="left:997px;top:777.5px;width:495px;height:28px;border-color:#dcdcdc"></div>
<div class="a" style="left:1290.5px;top:833px;width:80px;height:30px;background:#f9f9f9;border:1px solid #e6e6e6;border-radius:2px"></div>
<svg class="a" style="left:1302px;top:841px" width="15" height="14" viewBox="0 0 15 14" fill="none" stroke="#c8161d" stroke-width="1.8"><path d="M12.8 5.2A5.8 5.8 0 0 0 2.2 3.8M2.2 8.8A5.8 5.8 0 0 0 12.8 10.2"/><path d="M1.8 0.5V4.3H5.6M13.2 13.5V9.7H9.4"/></svg>
<div class="a" style="left:1328px;top:840px;font-size:12px;line-height:17px;color:#555;letter-spacing:0.5px">重置</div>
<div class="a" style="left:1412px;top:833px;width:80px;height:30px;background:#1b5ed1;border-radius:2px"></div>
<svg class="a" style="left:1426px;top:841px" width="15" height="14" viewBox="0 0 15 14" fill="none" stroke="#fff" stroke-width="1.6" stroke-linejoin="round"><path d="M14 0.8L0.8 6.3L5.3 8.3L14 0.8L7.5 12.8L5.3 8.3Z"/></svg>
<div class="a" style="left:1450px;top:840px;font-size:12px;line-height:17px;color:#fff;font-weight:400;-webkit-text-stroke:0.25px;letter-spacing:0.5px">提交</div>
<!-- /MAIN -->
</body></html>
